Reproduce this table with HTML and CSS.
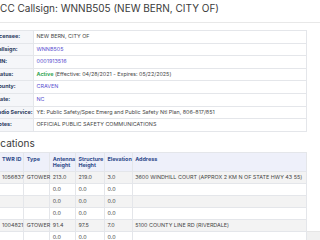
FILE: index.html
```html
<!DOCTYPE html>
<html lang="en">
<head>
<meta charset="utf-8">
<title>FCC Callsign WNNB505</title>
<link rel="stylesheet" href="styles.css">
</head>
<body>
<main class="page">
  <h1 class="title">FCC Callsign: WNNB505 (NEW BERN, CITY OF)</h1>
  <table class="info">
    <colgroup><col class="w-label"><col></colgroup>
    <tr><th>Licensee:</th><td>NEW BERN, CITY OF</td></tr>
    <tr><th>Callsign:</th><td><a class="link">WNNB505</a></td></tr>
    <tr><th>FRN:</th><td><a class="link">0001913516</a></td></tr>
    <tr><th>Status:</th><td><span class="active">Active</span> (Effective: 04/28/2021 - Expires: 05/22/2025)</td></tr>
    <tr><th>County:</th><td><a class="link">CRAVEN</a></td></tr>
    <tr><th>State:</th><td><a class="link">NC</a></td></tr>
    <tr><th>Radio Service:</th><td>YE: Public Safety/Spec Emerg and Public Safety Ntl Plan, 806-817/851</td></tr>
    <tr><th>Notes:</th><td>OFFICIAL PUBLIC SAFETY COMMUNICATIONS</td></tr>
  </table>
  <h2 class="section">Locations</h2>
  <table class="loc">
    <colgroup><col class="w1"><col class="w2"><col class="w3"><col class="w4"><col class="w5"><col></colgroup>
    <thead>
      <tr><th>TWR ID</th><th>Type</th><th>Antenna<br>Height</th><th>Structure<br>Height</th><th>Elevation</th><th>Address</th></tr>
    </thead>
    <tbody>
      <tr><td>1056837</td><td>GTOWER</td><td>213.0</td><td>219.0</td><td>3.0</td><td>3600 WINDHILL COURT (APPROX 2 KM N OF STATE HWY 43 55)</td></tr>
      <tr><td></td><td></td><td>0.0</td><td>0.0</td><td>0.0</td><td></td></tr>
      <tr><td></td><td></td><td>0.0</td><td>0.0</td><td>0.0</td><td></td></tr>
      <tr><td></td><td></td><td>0.0</td><td>0.0</td><td>0.0</td><td></td></tr>
      <tr><td>1004821</td><td>GTOWER</td><td>91.4</td><td>97.5</td><td>7.0</td><td>5100 COUNTY LINE RD (RIVERDALE)</td></tr>
      <tr><td></td><td></td><td>0.0</td><td>0.0</td><td>0.0</td><td></td></tr>
    </tbody>
  </table>
</main>
<div class="corner"></div>
</body>
</html>
```
FILE: styles.css
```css
html, body {
  margin: 0;
  padding: 0;
  background: #ffffff;
  overflow: hidden;
}
body {
  width: 320px;
  height: 240px;
  font-family: Inter, "Liberation Sans", Arial, sans-serif;
  color: #444;
}
.page {
  margin-left: -9px;
}
.title {
  margin: 0;
  padding: 2px 0 8px 3.2px;
  font-size: 10px;
  line-height: 12px;
  font-weight: 400;
  color: #3a3a3a;
  border-bottom: 1px solid #e8e8e8;
}
.info {
  margin-top: 7px;
  width: 316px;
  table-layout: fixed;
  border-collapse: collapse;
  font-size: 5.4px;
  line-height: 5.6px;
}
.w-label { width: 42px; }
.info th, .info td {
  border: 1px solid #e4e6ea;
  padding: 3px 2.5px;
  text-align: left;
  white-space: nowrap;
}
.info th {
  padding-left: 2.5px;
  background: #f5f6f9;
  color: #2c3b60;
  font-weight: 700;
}
.info td {
  color: #474747;
}
.link {
  color: #5a4fd0;
}
.active {
  color: #3aa757;
  font-weight: 700;
}
.section {
  margin: 5.5px 0 2.5px -2.3px;
  font-size: 10px;
  line-height: 12px;
  font-weight: 400;
  color: #3a3a3a;
}
.loc {
  margin-left: 7.5px;
  width: 308.5px;
  table-layout: fixed;
  border-collapse: collapse;
  font-size: 5.4px;
  line-height: 6px;
}
.w1 { width: 24.8px; }
.w2 { width: 26px; }
.w3 { width: 25.7px; }
.w4 { width: 29px; }
.w5 { width: 27.7px; }
.loc th, .loc td {
  border: 1px solid #e4e6ea;
  text-align: left;
  white-space: nowrap;
  padding: 2.5px 2.5px;
}
.loc th {
  padding: 3px 2.5px;
  background: #eef0fa;
  color: #2f4a8a;
  font-weight: 700;
  vertical-align: top;
}
.loc td {
  color: #474747;
}
.loc tbody tr:nth-child(odd) td {
  background: #f3f3f3;
}
.corner {
  position: absolute;
  left: 307px;
  top: 231px;
  width: 13px;
  height: 9px;
  background: #f1f1f1;
  border-top: 1px solid #e6e6e6;
}
```
